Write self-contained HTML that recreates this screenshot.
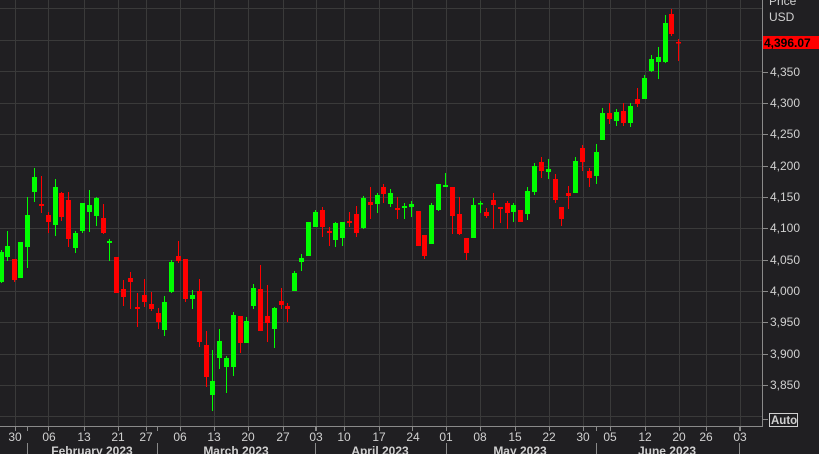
<!DOCTYPE html>
<html><head><meta charset="utf-8"><style>
html,body{margin:0;padding:0;background:#201f22;}
svg{display:block;}
text{font-family:"Liberation Sans",sans-serif;fill:#d0d0d0;font-size:12px;}
</style></head><body>
<svg width="819" height="454" viewBox="0 0 819 454" xmlns="http://www.w3.org/2000/svg">
<rect width="819" height="454" fill="#201f22"/>
<g stroke="#3a3a3a" stroke-width="1">
<line x1="0" x2="762" y1="8.5" y2="8.5"/><line x1="0" x2="762" y1="40.5" y2="40.5"/><line x1="0" x2="762" y1="71.5" y2="71.5"/><line x1="0" x2="762" y1="103.5" y2="103.5"/><line x1="0" x2="762" y1="134.5" y2="134.5"/><line x1="0" x2="762" y1="166.5" y2="166.5"/><line x1="0" x2="762" y1="197.5" y2="197.5"/><line x1="0" x2="762" y1="228.5" y2="228.5"/><line x1="0" x2="762" y1="260.5" y2="260.5"/><line x1="0" x2="762" y1="291.5" y2="291.5"/><line x1="0" x2="762" y1="322.5" y2="322.5"/><line x1="0" x2="762" y1="354.5" y2="354.5"/><line x1="0" x2="762" y1="385.5" y2="385.5"/><line x1="0" x2="762" y1="416.5" y2="416.5"/>
<line x1="15.5" x2="15.5" y1="0" y2="426"/><line x1="48.5" x2="48.5" y1="0" y2="426"/><line x1="84.5" x2="84.5" y1="0" y2="426"/><line x1="118.5" x2="118.5" y1="0" y2="426"/><line x1="146.5" x2="146.5" y1="0" y2="426"/><line x1="180.5" x2="180.5" y1="0" y2="426"/><line x1="214.5" x2="214.5" y1="0" y2="426"/><line x1="248.5" x2="248.5" y1="0" y2="426"/><line x1="283.5" x2="283.5" y1="0" y2="426"/><line x1="316.5" x2="316.5" y1="0" y2="426"/><line x1="344.5" x2="344.5" y1="0" y2="426"/><line x1="379.5" x2="379.5" y1="0" y2="426"/><line x1="412.5" x2="412.5" y1="0" y2="426"/><line x1="446.5" x2="446.5" y1="0" y2="426"/><line x1="480.5" x2="480.5" y1="0" y2="426"/><line x1="515.5" x2="515.5" y1="0" y2="426"/><line x1="549.5" x2="549.5" y1="0" y2="426"/><line x1="583.5" x2="583.5" y1="0" y2="426"/><line x1="610.5" x2="610.5" y1="0" y2="426"/><line x1="645.5" x2="645.5" y1="0" y2="426"/><line x1="679.5" x2="679.5" y1="0" y2="426"/><line x1="706.5" x2="706.5" y1="0" y2="426"/><line x1="740.5" x2="740.5" y1="0" y2="426"/>
</g>
<g fill="#00ff00" stroke="#00ff00">
<path stroke-width="1" d="M1.5 250V283M7.5 231V261M20.5 242V278M27.5 197V268M34.5 168V202M55.5 179V236M75.5 231V253M82.5 203V233M89.5 190V232M96.5 197V226M109.5 239V261M164.5 296V336M171.5 260V293M192.5 290V309M212.5 350V411M219.5 329V369M226.5 356V393M233.5 312V376M246.5 317V343M253.5 284V309M274.5 307V348M294.5 271V291M301.5 254V271M308.5 222V256M315.5 210V227M335.5 222V247M342.5 222V246M363.5 196V229M377.5 193V213M390.5 189V207M404.5 203V219M411.5 201V217M431.5 203V244M438.5 184V211M445.5 173V187M473.5 198V238M480.5 201V213M513.5 203V222M527.5 187V220M534.5 163V195M548.5 159V179M575.5 157V193M596.5 144V184M602.5 108V140M616.5 109V126M630.5 103V127M644.5 75V99M651.5 55V72M658.5 47V79M665.5 15V63"/>
<g stroke="none">
<rect x="-1" y="252" width="5" height="30"/><rect x="5" y="246" width="5" height="11"/><rect x="18" y="242" width="5" height="36"/><rect x="25" y="215" width="5" height="32"/><rect x="32" y="177" width="5" height="15"/><rect x="53" y="187" width="5" height="38"/><rect x="73" y="233" width="5" height="15"/><rect x="80" y="203" width="5" height="28"/><rect x="87" y="205" width="5" height="7"/><rect x="94" y="198" width="5" height="18"/><rect x="107" y="241" width="5" height="2"/><rect x="162" y="302" width="5" height="28"/><rect x="169" y="262" width="5" height="30"/><rect x="190" y="295" width="5" height="4"/><rect x="210" y="381" width="5" height="14"/><rect x="217" y="341" width="5" height="17"/><rect x="224" y="358" width="5" height="9"/><rect x="231" y="315" width="5" height="52"/><rect x="244" y="321" width="5" height="22"/><rect x="251" y="288" width="5" height="18"/><rect x="272" y="308" width="5" height="21"/><rect x="292" y="273" width="5" height="18"/><rect x="299" y="258" width="5" height="4"/><rect x="306" y="222" width="5" height="34"/><rect x="313" y="212" width="5" height="15"/><rect x="333" y="223" width="5" height="17"/><rect x="340" y="222" width="5" height="16"/><rect x="361" y="198" width="5" height="30"/><rect x="375" y="195" width="5" height="9"/><rect x="388" y="193" width="5" height="11"/><rect x="402" y="206" width="5" height="2"/><rect x="409" y="204" width="5" height="3"/><rect x="429" y="205" width="5" height="39"/><rect x="436" y="184" width="5" height="26"/><rect x="443" y="185" width="5" height="2"/><rect x="471" y="205" width="5" height="33"/><rect x="478" y="203" width="5" height="1.5"/><rect x="511" y="205" width="5" height="7"/><rect x="525" y="191" width="5" height="23"/><rect x="532" y="166" width="5" height="26"/><rect x="546" y="169" width="5" height="3"/><rect x="573" y="161" width="5" height="32"/><rect x="594" y="152" width="5" height="24"/><rect x="600" y="113" width="5" height="27"/><rect x="614" y="112" width="5" height="9"/><rect x="628" y="106" width="5" height="17"/><rect x="642" y="78" width="5" height="21"/><rect x="649" y="59" width="5" height="12"/><rect x="656" y="57" width="5" height="5"/><rect x="663" y="23" width="5" height="39"/>
</g></g>
<g fill="#ff0000" stroke="#ff0000">
<path stroke-width="1" d="M14.5 259V282M41.5 176V213M48.5 212V233M61.5 192V221M68.5 192V247M103.5 204V234M116.5 257V293M123.5 280V306M130.5 272V309M137.5 293V327M144.5 279V307M151.5 292V311M158.5 308V329M178.5 241V263M185.5 259V302M199.5 279V347M206.5 331V387M240.5 316V353M260.5 265V331M267.5 285V342M281.5 288V309M287.5 303V322M322.5 207V237M329.5 227V246M349.5 212V227M356.5 206V237M370.5 187V219M383.5 184V203M397.5 197V219M418.5 211V246M424.5 235V259M452.5 187V234M459.5 197V235M466.5 238V260M486.5 208V218M493.5 193V229M500.5 207V223M507.5 201V229M520.5 210V222M541.5 157V178M555.5 174V203M561.5 207V226M568.5 186V209M582.5 145V171M589.5 168V187M609.5 103V124M623.5 103V126M637.5 88V107M671.5 9V36M678.5 39V61"/>
<g stroke="none">
<rect x="12" y="259" width="5" height="21"/><rect x="39" y="204" width="5" height="2"/><rect x="46" y="215" width="5" height="7"/><rect x="59" y="193" width="5" height="24"/><rect x="66" y="200" width="5" height="39"/><rect x="101" y="218" width="5" height="15"/><rect x="114" y="257" width="5" height="36"/><rect x="121" y="289" width="5" height="8"/><rect x="128" y="278" width="5" height="4"/><rect x="135" y="307" width="5" height="2"/><rect x="142" y="295" width="5" height="7"/><rect x="149" y="304" width="5" height="5"/><rect x="156" y="313" width="5" height="9"/><rect x="176" y="256" width="5" height="5"/><rect x="183" y="259" width="5" height="40"/><rect x="197" y="291" width="5" height="51"/><rect x="204" y="345" width="5" height="32"/><rect x="238" y="316" width="5" height="27"/><rect x="258" y="289" width="5" height="42"/><rect x="265" y="316" width="5" height="7"/><rect x="279" y="301" width="5" height="4"/><rect x="285" y="306" width="5" height="3"/><rect x="320" y="210" width="5" height="17"/><rect x="327" y="231" width="5" height="2"/><rect x="347" y="221" width="5" height="2"/><rect x="354" y="214" width="5" height="19"/><rect x="368" y="202" width="5" height="3"/><rect x="381" y="187" width="5" height="7"/><rect x="395" y="208" width="5" height="2"/><rect x="416" y="211" width="5" height="35"/><rect x="422" y="235" width="5" height="21"/><rect x="450" y="187" width="5" height="29"/><rect x="457" y="214" width="5" height="20"/><rect x="464" y="238" width="5" height="15"/><rect x="484" y="212" width="5" height="4"/><rect x="491" y="200" width="5" height="5"/><rect x="498" y="207" width="5" height="2"/><rect x="505" y="203" width="5" height="10"/><rect x="518" y="210" width="5" height="12"/><rect x="539" y="162" width="5" height="9"/><rect x="553" y="179" width="5" height="21"/><rect x="559" y="207" width="5" height="12"/><rect x="566" y="193" width="5" height="3"/><rect x="580" y="148" width="5" height="14"/><rect x="587" y="171" width="5" height="7"/><rect x="607" y="113" width="5" height="6"/><rect x="621" y="111" width="5" height="12"/><rect x="635" y="99" width="5" height="5"/><rect x="669" y="14" width="5" height="20"/><rect x="676" y="42" width="5" height="1.5"/>
</g></g>
<g stroke="#8a8a8a" stroke-width="1">
<line x1="762.5" x2="762.5" y1="0" y2="427"/>
<line x1="0" x2="763" y1="426.5" y2="426.5"/>
<path d="M763 72.5h5M763 103.5h5M763 134.5h5M763 166.5h5M763 197.5h5M763 228.5h5M763 260.5h5M763 291.5h5M763 322.5h5M763 354.5h5M763 385.5h5M763 419.5h5"/>
<path d="M15.5 427v4M48.5 427v4M84.5 427v4M118.5 427v4M146.5 427v4M180.5 427v4M214.5 427v4M248.5 427v4M283.5 427v4M316.5 427v4M344.5 427v4M379.5 427v4M412.5 427v4M446.5 427v4M480.5 427v4M515.5 427v4M549.5 427v4M583.5 427v4M610.5 427v4M645.5 427v4M679.5 427v4M706.5 427v4M740.5 427v4"/>
<path d="M27.5 427v4M157.5 427v4M315.5 427v4M446.5 427v4M596.5 427v4M739.5 427v4M27.5 443v11M157.5 443v11M315.5 443v11M446.5 443v11M596.5 443v11M739.5 443v11"/>
</g>
<g font-size="12">
<text x="769" y="5">Price</text>
<text x="769" y="21">USD</text>
<text x="770" y="76">4,350</text><text x="770" y="107">4,300</text><text x="770" y="138">4,250</text><text x="770" y="170">4,200</text><text x="770" y="201">4,150</text><text x="770" y="232">4,100</text><text x="770" y="264">4,050</text><text x="770" y="295">4,000</text><text x="770" y="326">3,950</text><text x="770" y="358">3,900</text><text x="770" y="389">3,850</text>
</g>
<rect x="763" y="36" width="56" height="13" fill="#ff0000"/>
<text x="764" y="47" style="fill:#000;font-weight:bold;font-size:12px">4,396.07</text>
<rect x="769.5" y="413.5" width="28" height="13" fill="none" stroke="#d0d0d0"/>
<text x="771" y="424" style="font-weight:bold;font-size:11.5px">Auto</text>
<g text-anchor="middle">
<text x="15" y="441">30</text><text x="49" y="441">06</text><text x="84" y="441">13</text><text x="118" y="441">21</text><text x="146" y="441">27</text><text x="180" y="441">06</text><text x="214" y="441">13</text><text x="248" y="441">20</text><text x="283" y="441">27</text><text x="316" y="441">03</text><text x="344" y="441">10</text><text x="379" y="441">17</text><text x="413" y="441">24</text><text x="446" y="441">01</text><text x="480" y="441">08</text><text x="515" y="441">15</text><text x="549" y="441">22</text><text x="583" y="441">30</text><text x="610" y="441">05</text><text x="645" y="441">12</text><text x="679" y="441">20</text><text x="706" y="441">26</text><text x="740" y="441">03</text>
</g>
<g text-anchor="middle">
<text x="92" y="455" style="font-weight:bold">February 2023</text>
<text x="236" y="455" style="font-weight:bold">March 2023</text>
<text x="380" y="455" style="font-weight:bold">April 2023</text>
<text x="520" y="455" style="font-weight:bold">May 2023</text>
<text x="667" y="455" style="font-weight:bold">June 2023</text>
</g>
</svg>
</body></html>
